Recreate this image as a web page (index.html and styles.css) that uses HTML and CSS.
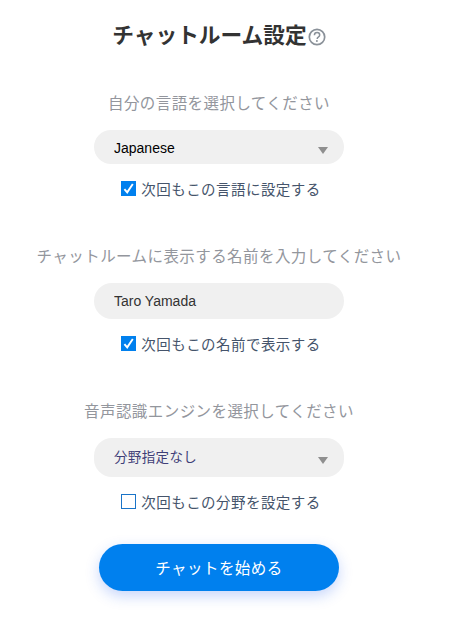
FILE: index.html
```html
<!DOCTYPE html>
<html lang="ja">

<head>
    <meta charset="UTF-8">
    <meta name="viewport" content="width=device-width, initial-scale=1.0">
    <title>チャットルーム設定</title>
    <link rel="stylesheet" href="styles.css">
</head>

<body>
    <div class="container">
        <h1 class="title">チャットルーム設定<svg class="help-icon" viewBox="0 0 18 18" width="18" height="18" aria-hidden="true">
                <circle cx="9" cy="9" r="7.7" fill="none" stroke="#8a9199" stroke-width="1.7" />
                <path d="M6.4 7.2c0-1.6 1.1-2.6 2.7-2.6s2.6 1 2.6 2.3c0 1-.5 1.6-1.4 2.2-.7.5-1.1.9-1.1 1.8" fill="none" stroke="#8a9199" stroke-width="1.5" />
                <circle cx="8.9" cy="13.1" r="1" fill="#8a9199" />
            </svg></h1>

        <div class="section">
            <p class="label">自分の言語を選択してください</p>
            <div class="select-wrap">
                <select class="field field-select">
                    <option>Japanese</option>
                    <option>English</option>
                </select>
            </div>
            <label class="remember">
                <span class="check-box">
                    <input type="checkbox" checked>
                    <svg viewBox="0 0 15 15" aria-hidden="true"><path d="M3.4 8.2L6.2 11.4 11.8 3" fill="none" stroke="#fff" stroke-width="1.9" /></svg>
                </span>
                次回もこの言語に設定する
            </label>
        </div>

        <div class="section">
            <p class="label">チャットルームに表示する名前を入力してください</p>
            <input class="field field-input" type="text" value="Taro Yamada">
            <label class="remember">
                <span class="check-box">
                    <input type="checkbox" checked>
                    <svg viewBox="0 0 15 15" aria-hidden="true"><path d="M3.4 8.2L6.2 11.4 11.8 3" fill="none" stroke="#fff" stroke-width="1.9" /></svg>
                </span>
                次回もこの名前で表示する
            </label>
        </div>

        <div class="section">
            <p class="label">音声認識エンジンを選択してください</p>
            <div class="select-wrap select-wrap-tall">
                <select class="field field-select field-tall">
                    <option>分野指定なし</option>
                </select>
            </div>
            <label class="remember">
                <span class="check-box">
                    <input type="checkbox">
                </span>
                次回もこの分野を設定する
            </label>
        </div>

        <button class="button">チャットを始める</button>
    </div>
</body>

</html>
```

FILE: styles.css
```css
body {
    font-family: "Liberation Sans", "Noto Sans CJK JP", sans-serif;
    margin: 0;
    background-color: #ffffff;
}

.container {
    display: flex;
    flex-direction: column;
    align-items: center;
    box-sizing: border-box;
    height: 622px;
    padding: 21px 14px 0 0;
}

.title {
    display: flex;
    align-items: center;
    gap: 1px;
    height: 30px;
    margin: 0 0 42px;
    font-size: 21.7px;
    line-height: 30px;
    font-weight: 700;
    color: #333333;
}

.help-icon {
    margin-top: 2px;
}

.section {
    display: flex;
    flex-direction: column;
    align-items: center;
    margin-bottom: 46px;
}

.section:last-of-type {
    margin-bottom: 31px;
}

.label {
    margin: 0 0 15px;
    font-size: 15.5px;
    line-height: 22px;
    letter-spacing: 0.43px;
    color: #93969d;
    white-space: nowrap;
}

.select-wrap {
    position: relative;
}

/* select arrow */
.select-wrap::after {
    content: "";
    position: absolute;
    right: 16px;
    bottom: 10px;
    border-left: 5px solid transparent;
    border-right: 5px solid transparent;
    border-top: 7px solid #8f8f8f;
    pointer-events: none;
}

.select-wrap-tall::after {
    bottom: 13px;
}

.field {
    display: block;
    box-sizing: border-box;
    width: 250px;
    border: none;
    border-radius: 18px;
    background-color: #f0f0f0;
    padding: 0 20px;
    font-family: inherit;
    font-size: 14px;
    outline: none;
}

.field-select {
    height: 34px;
    padding-top: 2px;
    color: #000000;
    appearance: none;
}

.field-input {
    height: 36px;
    color: #333333;
}

.field-tall {
    height: 39px;
    padding-top: 0;
    color: #3f3f78;
    font-size: 13.5px;
    letter-spacing: 0.35px;
}

.remember {
    display: flex;
    align-items: center;
    gap: 5px;
    height: 22px;
    margin: 13px 0 1px;
    padding-left: 4px;
    font-size: 14.5px;
    letter-spacing: 0.45px;
    color: #45546b;
}

.check-box {
    position: relative;
    width: 15px;
    height: 15px;
    margin-top: 1px;
}

.check-box input {
    display: block;
    box-sizing: border-box;
    width: 15px;
    height: 15px;
    margin: 0;
    border: 1px solid #1a74c8;
    background-color: #ffffff;
    appearance: none;
}

.check-box input:checked {
    border-color: #0080ee;
    background-color: #0080ee;
}

.check-box svg {
    position: absolute;
    top: 0;
    left: 0;
    width: 15px;
    height: 15px;
}

.button {
    flex-shrink: 0;
    width: 240px;
    height: 47px;
    padding: 0 0 2px;
    border: none;
    border-radius: 24px;
    background-color: #0080ee;
    color: #ffffff;
    font-family: inherit;
    font-size: 15.5px;
    letter-spacing: 0.45px;
    box-shadow: 0 5px 14px rgba(30, 90, 240, 0.25);
    cursor: pointer;
}

.button:hover {
    background-color: #006fd0;
}
```
